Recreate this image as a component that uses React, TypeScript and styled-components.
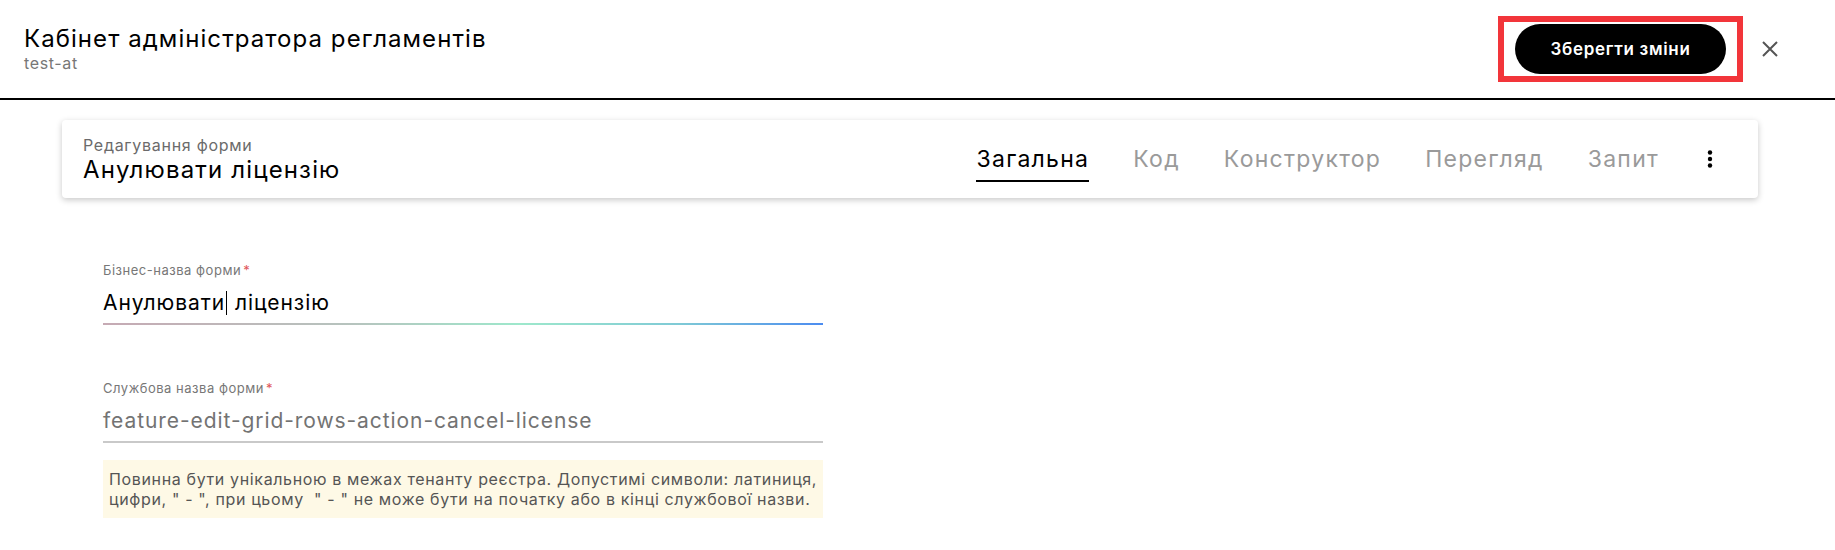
import styled, { createGlobalStyle } from 'styled-components';

const GlobalStyle = createGlobalStyle`
  body {
    margin: 0;
    background: #fff;
    font-family: Inter, "Noto Sans", "Liberation Sans", sans-serif;
    color: #000;
  }
`;

const Header = styled.header`
  display: flex;
  align-items: center;
  height: 98px;
  padding: 0 53px 0 24px;
  border-bottom: 2px solid #000;
`;

const TitleBlock = styled.div`
  display: flex;
  flex-direction: column;
  flex: 1;
`;

const Title = styled.h1`
  margin: 0;
  font-size: 24px;
  line-height: 28px;
  font-weight: 400;
  letter-spacing: 0.044em;
`;

const Subtitle = styled.span`
  margin-top: 1px;
  font-size: 16px;
  line-height: 19px;
  color: #777;
  letter-spacing: 0.04em;
`;

const Highlight = styled.div`
  display: flex;
  padding: 2px 11px;
  border: 6px solid #f2353a;
`;

const SaveButton = styled.button`
  width: 211px;
  height: 50px;
  border: none;
  border-radius: 25px;
  background: #000;
  color: #fff;
  font-family: inherit;
  font-size: 17px;
  font-weight: 600;
  letter-spacing: 0.04em;
  cursor: pointer;
`;

const CloseButton = styled.button`
  display: flex;
  align-items: center;
  justify-content: center;
  width: 24px;
  height: 24px;
  margin-left: 15px;
  padding: 0;
  border: none;
  background: none;
  color: #555;
`;

const Card = styled.section`
  display: flex;
  align-items: center;
  height: 78px;
  margin: 20px 77px 0 62px;
  padding: 0 36px 0 21px;
  background: #fff;
  border-radius: 4px;
  box-shadow: 0 2px 6px rgba(0, 0, 0, 0.22);
`;

const CardHeading = styled.div`
  display: flex;
  flex-direction: column;
  flex: 1;
`;

const Caption = styled.span`
  font-size: 16px;
  line-height: 20px;
  color: #6b6b6b;
  letter-spacing: 0.045em;
`;

const FormName = styled.span`
  margin-top: 1px;
  font-size: 24px;
  line-height: 28px;
  letter-spacing: 0.048em;
`;

const Tabs = styled.nav`
  display: flex;
  align-items: center;
  gap: 44px;
`;

const Tab = styled.span<{ $active?: boolean }>`
  padding: 10px 0 8px;
  font-size: 23px;
  line-height: 26px;
  letter-spacing: 0.055em;
  color: ${(p) => (p.$active ? '#000' : '#9a9a9a')};
  border-bottom: 2px solid ${(p) => (p.$active ? '#000' : 'transparent')};
`;

const MenuButton = styled.span`
  display: flex;
  margin-left: 39px;
  color: #000;
`;

const Form = styled.div`
  display: flex;
  flex-direction: column;
  width: 720px;
  margin: 64px 0 0 103px;
`;

const Field = styled.div<{ $gap: number }>`
  display: flex;
  flex-direction: column;
  margin-bottom: ${(p) => p.$gap}px;
`;

const Label = styled.label`
  font-size: 13px;
  line-height: 16px;
  color: #777;
  letter-spacing: 0.04em;
`;

const Required = styled.span`
  margin-left: 2px;
  color: #e0555a;
`;

const Value = styled.div<{ $muted?: boolean }>`
  margin-top: 11px;
  font-size: 21px;
  line-height: 28px;
  letter-spacing: 0.044em;
  color: ${(p) => (p.$muted ? '#737373' : '#000')};
`;

const Caret = styled.span`
  display: inline-block;
  width: 1px;
  height: 24px;
  margin: 0 1px -5px;
  background: #000;
`;

const Underline = styled.div<{ $focused?: boolean }>`
  height: 2px;
  margin-top: 6px;
  background: ${(p) =>
    p.$focused
      ? 'linear-gradient(90deg, #c6aab4 0%, #b6c4be 35%, #9ee8cc 58%, #7fcad6 80%, #4c8cf0 100%)'
      : '#c9c9c9'};
`;

const Hint = styled.div`
  padding: 9px 6px;
  background: #fef9e6;
  font-size: 16px;
  line-height: 20px;
  letter-spacing: 0.04em;
  color: #555;
  white-space: nowrap;
`;

const tabs = ['Загальна', 'Код', 'Конструктор', 'Перегляд', 'Запит'];

export default function App() {
  return (
    <>
      <GlobalStyle />
      <Header>
        <TitleBlock>
          <Title>Кабінет адміністратора регламентів</Title>
          <Subtitle>test-at</Subtitle>
        </TitleBlock>
        <Highlight>
          <SaveButton>Зберегти зміни</SaveButton>
        </Highlight>
        <CloseButton aria-label="Закрити">
          <svg width="16" height="16" viewBox="0 0 16 16" fill="none" stroke="currentColor" strokeWidth="2">
            <path d="M1 1L15 15M15 1L1 15" />
          </svg>
        </CloseButton>
      </Header>

      <Card>
        <CardHeading>
          <Caption>Редагування форми</Caption>
          <FormName>Анулювати ліцензію</FormName>
        </CardHeading>
        <Tabs>
          {tabs.map((t, i) => (
            <Tab key={t} $active={i === 0}>
              {t}
            </Tab>
          ))}
        </Tabs>
        <MenuButton>
          <svg width="24" height="24" viewBox="0 0 24 24" fill="currentColor">
            <circle cx="12" cy="5.5" r="2.2" />
            <circle cx="12" cy="12" r="2.2" />
            <circle cx="12" cy="18.5" r="2.2" />
          </svg>
        </MenuButton>
      </Card>

      <Form>
        <Field $gap={55}>
          <Label>
            Бізнес-назва форми<Required>*</Required>
          </Label>
          <Value>
            Анулювати<Caret /> ліцензію
          </Value>
          <Underline $focused />
        </Field>
        <Field $gap={17}>
          <Label>
            Службова назва форми<Required>*</Required>
          </Label>
          <Value $muted>feature-edit-grid-rows-action-cancel-license</Value>
          <Underline />
        </Field>
        <Hint>
          Повинна бути унікальною в межах тенанту реєстра. Допустимі символи: латиниця,
          <br />
          цифри, " - ", при цьому&nbsp; " - " не може бути на початку або в кінці службової назви.
        </Hint>
      </Form>
    </>
  );
}
